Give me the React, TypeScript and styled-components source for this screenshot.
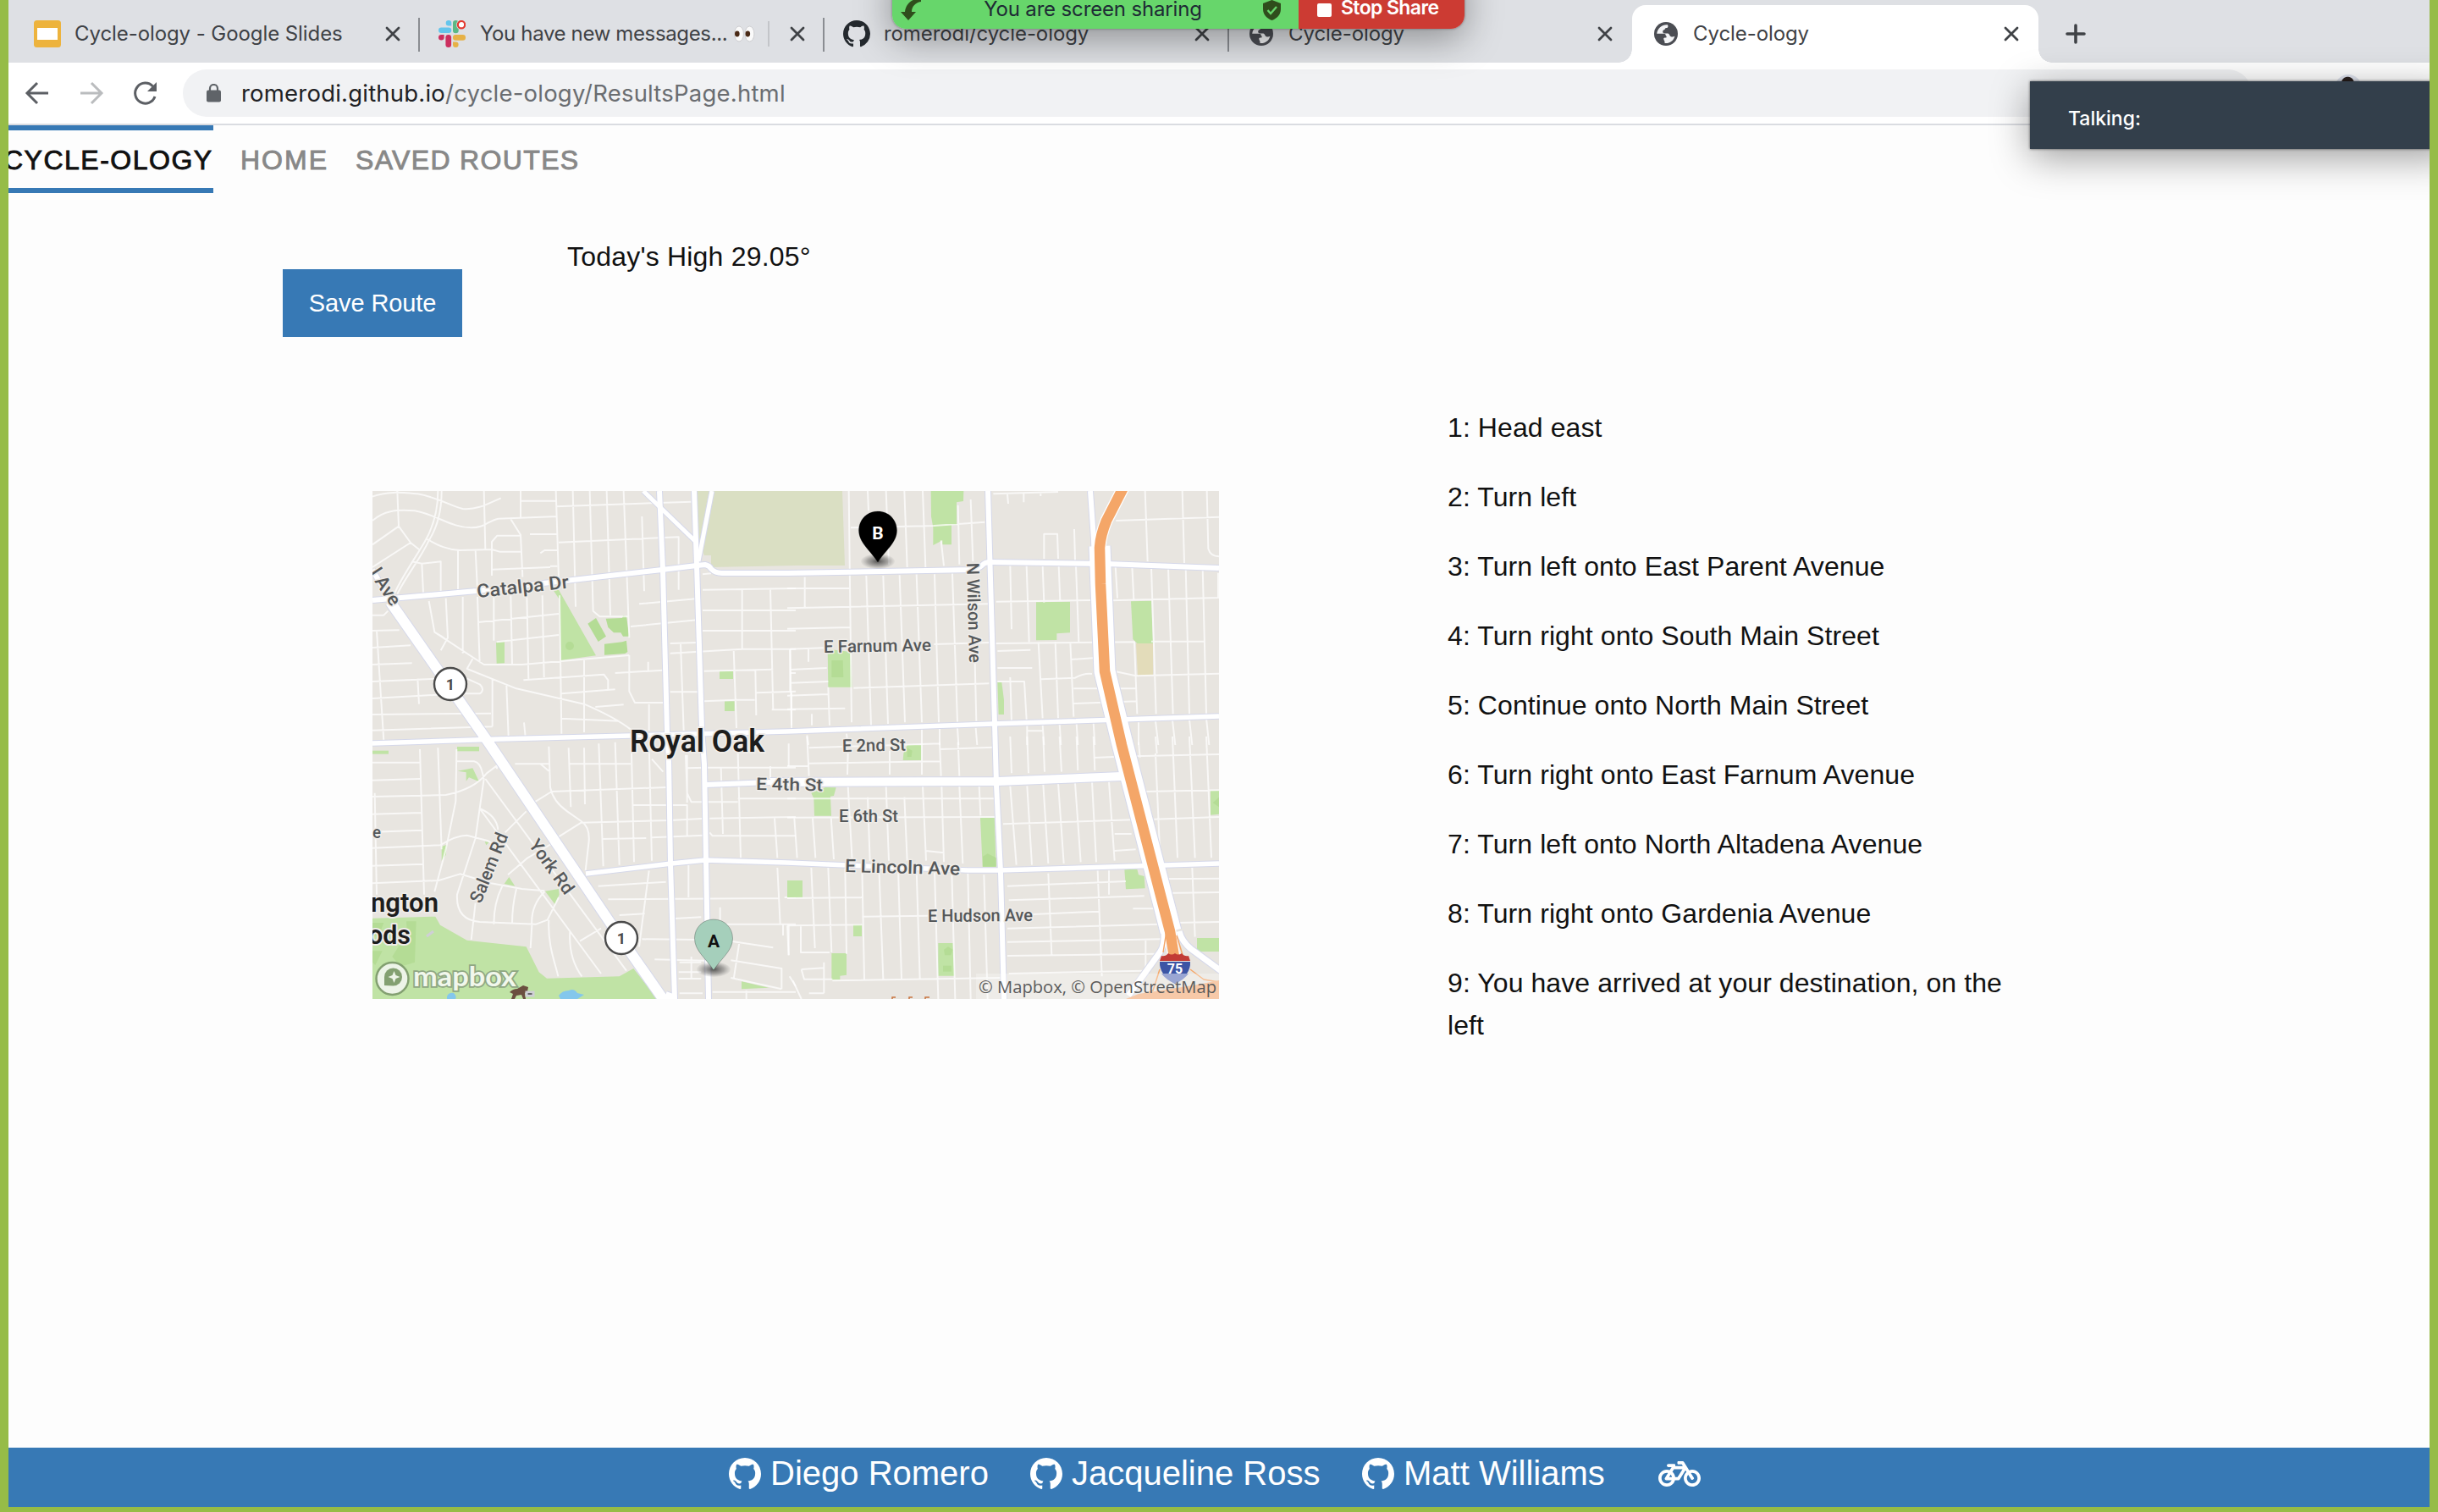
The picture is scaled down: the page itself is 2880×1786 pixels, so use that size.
import React from "react";
import styled, { createGlobalStyle, css } from "styled-components";
import { FaBicycle } from "react-icons/fa";

const BLUE = "#3779b5";
const LIME = "#96bc47";
const UI = `Inter, "Noto Sans", sans-serif`;
const BODY = `"Liberation Sans", Arial, sans-serif`;
const MAPFONT = `Roboto, "Open Sans", sans-serif`;

const Global = createGlobalStyle`
  * { box-sizing: border-box; }
  body { margin: 0; background: #fdfdfd; }
`;

const Screen = styled.div`
  position: relative;
  width: 2880px;
  height: 1786px;
  display: flex;
  flex-direction: column;
  border: solid ${LIME};
  border-width: 0 10px 6px;
  background: #fdfdfd;
  overflow: hidden;
  font-family: ${BODY};
`;

/* ---------- browser chrome ---------- */
const TabStrip = styled.div`
  flex: none;
  height: 74px;
  display: flex;
  background: #dee0e4;
  font-family: ${UI};
`;

const Tab = styled.div<{ $width: number; $pad?: number; $active?: boolean; $divider?: boolean }>`
  position: relative;
  flex: none;
  width: ${(p) => p.$width}px;
  height: 74px;
  display: flex;
  align-items: center;
  padding: 0 23px 0 ${(p) => p.$pad ?? 22}px;
  ${(p) => !p.$active && "padding-top: 6px;"}
  ${(p) =>
    p.$divider &&
    css`
      &::after {
        content: "";
        position: absolute;
        right: 0;
        top: 21px;
        width: 2px;
        height: 40px;
        background: #8a8d92;
      }
    `}
  ${(p) =>
    p.$active &&
    css`
      margin-top: 6px;
      height: 68px;
      background: #fff;
      border-radius: 16px 16px 0 0;
      &::before,
      &::after {
        content: "";
        position: absolute;
        bottom: 0;
        width: 16px;
        height: 16px;
      }
      &::before {
        left: -16px;
        background: radial-gradient(circle at 0 0, transparent 15.5px, #fff 16px);
      }
      &::after {
        right: -16px;
        background: radial-gradient(circle at 100% 0, transparent 15.5px, #fff 16px);
      }
    `}
`;

const TabTitle = styled.span<{ $gap?: number; $track?: number }>`
  margin-left: ${(p) => p.$gap ?? 16}px;
  font-size: 24px;
  line-height: 30px;
  letter-spacing: ${(p) => p.$track ?? -0.08}px;
  color: #3f4246;
  white-space: nowrap;
`;

const TabBody = styled.div`
  flex: 1;
  min-width: 0;
  display: flex;
  align-items: center;
`;

const CloseSlot = styled.div`
  flex: none;
  display: flex;
`;

const EyesSlot = styled.span`
  display: flex;
  margin-left: 8px;
`;

const FaintBar = styled.span`
  width: 2px;
  height: 30px;
  margin-left: 15px;
  background: #c3c5c9;
`;

const NewTab = styled.div`
  margin-left: 32px;
  height: 80px;
  display: flex;
  align-items: center;
`;

const Toolbar = styled.div`
  flex: none;
  height: 74px;
  display: flex;
  align-items: center;
  padding: 0 210px 0 17px;
  background: #fff;
  border-bottom: 2px solid #dadce1;
`;

const NavIcons = styled.div`
  display: flex;
  gap: 32px;
  width: 189px;
`;

const AddressBar = styled.div`
  flex: 1;
  height: 56px;
  display: flex;
  align-items: center;
  gap: 24px;
  padding-left: 28px;
  border-radius: 28px;
  background: #f1f2f4;
  font-family: ${UI};
  font-size: 27.5px;
  letter-spacing: 0.21px;
  color: #6a6d71;
`;

const Host = styled.span`
  color: #202124;
`;

/* ---------- page ---------- */
const SiteNav = styled.nav`
  flex: none;
  height: 80px;
  display: flex;
  font-size: 32px;
`;

const NavItem = styled.a<{ $brand?: boolean; $gap: number; $width?: number; $track: number }>`
  display: flex;
  align-items: center;
  margin-left: ${(p) => p.$gap}px;
  width: ${(p) => (p.$width ? `${p.$width}px` : "auto")};
  padding-top: 2px;
  color: ${(p) => (p.$brand ? "#111" : "#888")};
  letter-spacing: ${(p) => p.$track}px;
  -webkit-text-stroke: 0.9px currentColor;
  white-space: nowrap;
  border: solid ${(p) => (p.$brand ? BLUE : "transparent")};
  border-width: 6px 0;
`;

const TopRow = styled.section`
  flex: none;
  height: 252px;
  display: flex;
  align-items: flex-start;
  padding-left: 324px;
`;

const SaveButton = styled.button`
  width: 212px;
  height: 80px;
  margin: 90px 124px 0 0;
  padding: 0;
  border: 0;
  background: ${BLUE};
  color: #fff;
  font: 29px/80px ${BODY};
  letter-spacing: -0.1px;
`;

const Weather = styled.p`
  margin: 57px 0 0;
  font-size: 32px;
  line-height: 36px;
  letter-spacing: 0.2px;
  color: #111;
`;

const Results = styled.section`
  flex: 1;
  display: flex;
  align-items: flex-start;
  padding-left: 430px;
`;

const MapFrame = styled.div`
  flex: none;
  width: 1000px;
  height: 600px;
  margin: 100px 270px 0 0;
  svg {
    display: block;
  }
`;

const Steps = styled.div`
  width: 690px;
`;

const Step = styled.p`
  margin: 0 0 32px;
  font-size: 32px;
  line-height: 50px;
  letter-spacing: 0.08px;
  color: #111;
`;

const Footer = styled.footer`
  flex: none;
  height: 70px;
  display: flex;
  align-items: flex-start;
  padding: 6px 0 0 851px;
  background: ${BLUE};
  color: #fff;
`;

const Person = styled.a<{ $width: number }>`
  display: flex;
  align-items: center;
  gap: 11px;
  width: ${(p) => p.$width}px;
  height: 48px;
  font-size: 40px;
  line-height: 48px;
  white-space: nowrap;
  svg {
    flex: none;
    margin-top: 2px;
  }
`;

const BikeSlot = styled.span`
  display: flex;
  margin-top: 0;
`;

/* ---------- floating meeting controls ---------- */
const ShareBar = styled.div`
  position: absolute;
  left: 1044px;
  top: -40px;
  width: 676px;
  height: 74px;
  display: flex;
  padding-top: 40px;
  background: linear-gradient(90deg, #67d66b 480px, #cc3b33 480px);
  border-radius: 0 0 16px 16px;
  box-shadow: 0 12px 44px rgba(0, 0, 0, 0.36), 0 0 3px rgba(0, 0, 0, 0.4);
  font-family: ${UI};
`;

const ShareInfo = styled.div`
  width: 480px;
  display: flex;
  padding: 0 21px 0 10px;
  justify-content: space-between;
`;

const ShareText = styled.span`
  margin: -4px 0 0 1px;
  font-size: 24px;
  line-height: 30px;
  letter-spacing: -0.15px;
  color: #1e2b35;
  white-space: nowrap;
`;

const StopShare = styled.div`
  display: flex;
  gap: 11px;
  padding-left: 22px;
  color: #fff;
  font-size: 23px;
  line-height: 30px;
  font-weight: 600;
  letter-spacing: -0.6px;
  white-space: nowrap;
`;

const StopSquare = styled.span`
  width: 17px;
  height: 16px;
  margin-top: 4px;
  border-radius: 2px;
  background: #fff;
`;

const StopLabel = styled.span`
  margin-top: -6px;
`;

const Talking = styled.div`
  position: absolute;
  left: 2388px;
  top: 96px;
  width: 500px;
  height: 80px;
  padding: 4px 0 0 45px;
  background: #333f4b;
  box-shadow: 0 10px 46px rgba(0, 0, 0, 0.38), 0 0 3px rgba(0, 0, 0, 0.6);
  color: #fff;
  font: 500 23px/80px ${UI};
`;

const Avatar = styled.div`
  position: absolute;
  left: 2748px;
  top: 88px;
  width: 32px;
  height: 32px;
  border-radius: 50%;
  background: radial-gradient(circle at 48% 32%, #2b211e 7px, #dfe3ee 8px);
`;

const Octocat = ({ size, color = "currentColor" }: { size: number; color?: string }) => (
  <svg width={size} height={size} viewBox="0 0 16 16" fill={color}>
    <path d="M8 0C3.58 0 0 3.58 0 8c0 3.54 2.29 6.53 5.47 7.59.4.07.55-.17.55-.38 0-.19-.01-.82-.01-1.49-2.01.37-2.53-.49-2.69-.94-.09-.23-.48-.94-.82-1.13-.28-.15-.68-.52-.01-.53.63-.01 1.08.58 1.23.82.72 1.21 1.87.87 2.33.66.07-.52.28-.87.51-1.07-1.78-.2-3.64-.89-3.64-3.95 0-.87.31-1.59.82-2.15-.08-.2-.36-1.02.08-2.12 0 0 .67-.21 2.2.82.64-.18 1.32-.27 2-.27.68 0 1.36.09 2 .27 1.53-1.04 2.2-.82 2.2-.82.44 1.1.16 1.92.08 2.12.51.56.82 1.27.82 2.15 0 3.07-1.87 3.75-3.65 3.95.29.25.54.73.54 1.48 0 1.07-.01 1.93-.01 2.2 0 .21.15.46.55.38A8.013 8.013 0 0016 8c0-4.42-3.58-8-8-8z" />
  </svg>
);

const Globe = () => (
  <svg width="28" height="28" viewBox="0 0 28 28">
    <circle cx="14" cy="14" r="14" fill="#4b4d53" />
    <path
      fill="#f3f4f6"
      d="M16 3.2C9.5 2.6 4 7 3.2 13.8h8c1.700 0 2.600.8 2.600 2.400 1 .3 1.200 1.500.4 2.300h-1.600c-1 0-1.500.8-1.300 1.800.3 1.400 1.200 2.200 1.200 3.200v1.400c5.600.6 10.500-2.500 11.900-8.200-1 .8-3 1.200-4.500.5-1.800-.8-1.600-3.400-3.400-3.800h-4.300c-1.300 0-2-.8-2-1.900 0-1.400.9-2.300 2.300-2.400.2-1.300.7-2 2-2.100 1.200-.1 2-.9 2-2.100z"
    />
  </svg>
);

const Cross = () => (
  <svg width="18" height="18" viewBox="0 0 18 18" stroke="#3f4246" strokeWidth="2.8" strokeLinecap="round">
    <path d="M2 2l14 14M16 2L2 16" />
  </svg>
);

const Slides = () => (
  <svg width="32" height="32" viewBox="0 0 32 32">
    <rect width="32" height="32" rx="3.5" fill="#edb33d" />
    <rect x="4" y="9" width="24" height="14" fill="#fff" />
  </svg>
);

const Slack = () => (
  <svg width="32" height="32" viewBox="0 0 32 32">
    <g fill="#64c5ec">
      <path d="M12 0a3.3 3.3 0 0 1 3.3 3.3v3.3H12A3.3 3.3 0 0 1 12 0z" />
      <rect x="0" y="8.4" width="15.3" height="6.7" rx="3.3" />
    </g>
    <rect x="17" y="0" width="6.7" height="15.3" rx="3.3" fill="#5bb885" />
    <g fill="#cc2f5f">
      <rect x="8.4" y="17" width="6.7" height="15" rx="3.3" />
      <path d="M0 20.3A3.3 3.3 0 0 0 6.6 20.3V17H3.3A3.3 3.3 0 0 0 0 20.3z" />
    </g>
    <g fill="#e6b146">
      <rect x="17" y="17" width="15" height="6.7" rx="3.3" />
      <path d="M17 25.4v3.3a3.3 3.3 0 1 0 3.3-3.3z" />
    </g>
    <circle cx="27" cy="5.2" r="6" fill="#dee0e4" />
    <circle cx="27" cy="5.2" r="4.2" fill="#fff" stroke="#e33a30" strokeWidth="2.2" />
  </svg>
);

const Eyes = () => (
  <svg width="25" height="20" viewBox="0 0 25 20">
    <g fill="#fafafa" stroke="#c5c5c8" strokeWidth=".8">
      <ellipse cx="6" cy="10" rx="5.4" ry="9" />
      <ellipse cx="18.5" cy="10" rx="5.4" ry="9" />
    </g>
    <g fill="#4a2a16">
      <ellipse cx="3.8" cy="10" rx="2.8" ry="3.4" />
      <ellipse cx="16.3" cy="10" rx="2.8" ry="3.4" />
    </g>
  </svg>
);

/* ---------- map ---------- */
const MAJOR: [string, number][] = [
  ["M339 0L343 93L348 283L350 317L352 440L357 600", 6],
  ["M380 0L383 87L389 280L392 323L394 437L397 600", 6],
  ["M320 0L382 60", 5],
  ["M401 0L385 83", 5],
  ["M0 129L123 118L342 93L383 88L393 87Q398 88 400 92Q405 97 413 97L490 97L707 93Q716 92 720 88Q723 84 730 84L867 86L1000 91", 6],
  ["M0 298L150 293L490 284L733 275L1000 266", 5.5],
  ["M393 347L470 344", 6],
  ["M470 344L738 343L885 337", 10],
  ["M252 452L353 440L393 436L490 439L703 448L740 448L1000 440", 5.5],
  ["M727 0L735 275L737 347L742 450L746 600", 6],
  ["M848 0L852 57L853 90L857 217", 6],
  ["M0 93L23 133", 6],
  ["M21 131L137 297L293 528L346 604", 12],
  ["M346 596L357 600", 10],
  ["M859 65L865 213L885 295L943 520", 25],
  ["M935 520Q936 538 930 545Q915 566 893 596", 7],
  ["M953 520Q956 532 967 541L1004 568", 7],
];

const QUADS = [
  {
    at: "translate(-10 -10)",
    roads:
      "M30 50C80 30 130 35 190 40C270 55 310 85 350 93C400 98 440 75 485 55M118 30L123 155L30 220M30 135C70 100 110 95 180 100C260 115 310 160 380 160C430 160 440 135 475 128L685 120M123 155L165 213L195 237M165 213L30 300M262 30C262 90 250 150 215 210C180 270 130 340 105 400M275 30C275 90 265 150 230 205C200 270 150 330 118 395M222 200C260 220 290 238 340 240L455 237M425 30L430 237M555 30V125M555 65H680M520 130L555 185L562 335M588 183H685M453 330V210L472 188H555M453 237L480 245H560M625 250L640 240H685M453 308L660 300M660 296H685M680 30L690 340M740 30L750 440M800 30L812 455L835 475H940M860 30L873 470M920 30L940 550M680 85L1160 68M690 212L1115 193L1115 380M985 120L993 385M170 280L205 287L272 280V385M205 287L210 390M333 240V385M395 240L402 380M230 420L250 530L425 645H560L940 612M250 530L275 545L295 560M290 410L297 550L272 595M350 405V605M402 405L410 640M460 400V560M405 495L690 465M470 565L690 540M520 400L525 645M577 400L583 695M632 400L638 690M693 400L700 890M975 430L1175 412M945 510L1180 487M385 625L365 660L540 730L780 785C850 815 900 840 945 875M940 612V740L960 780H1060M565 700L850 680L865 700V735M700 748L890 733M780 630V885M820 795L920 787M700 836L905 845M890 675L1060 665M1007 635V665M1085 570L1180 567M1085 605L1340 590M1122 570L1133 880M1085 742L1190 742M45 525L70 915M30 525L125 523M30 585L165 577M30 645L170 640M30 705L255 695M30 765L300 750M30 822L450 818M30 878L455 865M455 695V865M365 695L410 715Q430 735 410 748H325M505 720L512 900M190 695L195 785M30 470H70L85 455M567 850L572 900M1010 785V880M1200 380L1530 375M1200 453H1530M1200 525H1530M1340 380V590L1530 590M1440 375L1450 808M1205 668L1450 662M1310 590L1320 870M1205 775L1320 770H1385M1387 665L1390 825M1390 745L1530 740M1445 805H1530M1510 590V740M1515 745V880M1530 675H1510M1200 325L1230 322",
    green: ["670 380 690 380 822 613 697 630 693 415", "468 567 498 565 498 640 470 641", "1260 669 1308 669 1308 696 1260 696", "1278 775 1313 775 1313 810 1278 810"],
    dark: ["793 500 822 480 858 545 830 564", "857 482 915 480 918 472 930 474 940 545 918 545 910 532 885 532 865 513", "852 572 915 565 930 560 934 600 925 606 852 611"],
  },
  {
    at: "translate(490 -10)",
    roads:
      "M218 30L228 850M285 30L288 100M350 30L360 290M415 30L425 300M480 30L490 300M545 205L555 295M225 160L520 153L700 140M605 80L610 290M650 60L658 280M730 40L960 33M780 40L783 75M838 35V70M898 33V48M910 270V182H957L960 270M1017 165L1020 275M1165 135L1530 122M1268 30L1277 280M1400 30L1407 285M1487 30L1492 235Q1500 262 1530 262M0 375H225M0 445L225 440L715 430M740 422L1080 417M1150 418L1530 408M0 518L225 513M62 335V445M280 330L297 860M340 330L357 855M398 328L417 850M458 325L477 850M522 325L537 850M585 322L603 848M520 573L715 567M665 640L670 845M235 728L715 712M10 590L145 585M10 590L15 860M10 663L140 657M10 710L145 705M0 755L145 750M0 803L205 800M145 725L150 860M75 590V635M87 820V860M790 295L795 520M848 295L857 565M905 295L910 425M962 295L967 420M1023 295L1033 565M1163 295L1170 410M1222 295L1228 415M1290 300L1307 820M1350 300L1367 820M1412 300L1425 820M1472 300L1485 820M1527 320V410M740 570L1230 565L1240 820M1290 563H1480M745 597L862 593M745 657H868M890 565L905 835M950 565L960 835M1003 565L1015 830M1005 627L1105 620M900 697L1020 692Q1050 675 1080 678M1165 670L1235 685L1530 677M1015 730H1235M1015 783L1240 775M745 705H840L848 840M790 690L795 850M848 880H905M850 860V930M905 860L910 930M965 855L970 930M1025 853L1030 930M1085 850L1090 930M1245 850V930M1305 845L1315 930M1365 842L1375 930M1425 840L1435 930M1485 835L1495 930M70 895L75 930M210 890L215 930M477 875V930M540 870V930M603 870L607 930M668 870L673 930",
    green: ["509 30 625 30 624 66 600 70 600 150 582 150 582 220 550 220 550 205 517 222 517 160 510 120", "882 424 1002 422 1002 532 955 535 955 558 882 559", "1218 421 1290 419 1296 570 1240 570 1225 555", "143 590 225 600 230 725 145 725", "745 708 760 708 768 770 768 822 749 822"],
    dark: ["157 630 197 630 199 690 157 690"],
  },
  {
    at: "translate(-10 290)",
    roads:
      "M198 45L213 560M262 40L275 400M30 92H198M30 155L198 150M30 213L290 207C350 195 400 175 435 130L475 100M30 275L205 270M35 338L205 332M30 395L270 385C310 360 340 350 365 350L440 370L475 390M30 458L210 452M30 520L265 510L340 487L450 520L560 540L640 547M38 200L45 560M328 45L325 230L290 400L250 550M328 88H390Q412 92 420 130L425 150M430 150L930 830M425 150L395 360L330 560Q325 650 410 657M410 255L840 840M410 255Q470 280 475 330M500 340L575 265M475 95L470 115M510 490L580 430L665 380M395 590L380 720M490 530Q460 590 460 665M540 540Q525 600 525 665M410 657L610 665L650 650L690 570M640 550Q590 600 595 670L590 750M655 650C650 740 680 810 688 850M730 690C725 770 750 820 772 850M765 725L840 680M655 35L660 180Q670 230 720 265L770 300Q800 320 797 370L785 475M535 97H655M625 97L655 122M600 235L665 195L1070 180M690 355L770 305L1085 297L1210 290M725 40L733 250M780 40L783 240M832 25L848 460M890 20L905 455M947 20L957 445M1010 20L1020 440M1020 80L1060 125M725 97H945M950 243H1145V350M1145 235V65M845 363L1000 360M1020 358L1205 350M1140 65L1145 200L1160 232H1325M1140 112L1215 110M830 530L1070 515M865 577L1470 573M905 633L995 628M1010 475L975 745M985 718L1195 720M1100 645L1195 640M1150 455V570M1215 110H1530M1265 110L1272 345M1325 60L1335 430M1325 220H1530M1225 340L1235 352H1530M1225 290L1530 285M1455 290L1465 430M1220 665H1530M1262 605V650M1465 465L1475 665M1490 570H1530M1485 665V705M1505 670V775M1300 725L1450 748M1330 730L1310 860M1300 793L1480 822V895M1300 855L1480 895M1030 790L1240 795M1118 800H1195M1115 835H1195M1115 858H1195M1118 910H1200M1160 780V860M1235 905H1530M1355 900V930M1440 105V165M1505 25V105M1508 850L1530 885",
    green: [
      "30 644 253 638 270 668 365 722 575 745 620 835 648 857 905 850 955 822 1040 930 30 930",
      "330 36 408 36 408 52 330 52",
      "30 50 87 50 87 62 30 62",
      "332 122 385 112 408 160 372 145 362 158 362 127",
      "275 390 293 383 290 420 275 440",
      "514 498 535 530 497 522",
      "642 548 690 540 692 560 677 595",
      "428 372 443 375 433 385",
      "1500 510 1530 510 1530 570 1500 570",
      "1338 868 1435 890 1338 895",
    ],
    dark: ["30 660 70 660 55 700 30 710", "150 655 185 655 180 800 130 815 100 780 125 740 155 740", "30 760 65 760 40 810 30 800"],
  },
  {
    at: "translate(490 290)",
    roads:
      "M70 0L77 140M77 40L540 25M77 95L540 88M215 60L213 135M363 50V135M477 30V135M540 20L545 140M540 45L730 38M605 20L610 140M0 105H75M0 220H735M0 287L740 285M790 0L795 130M850 0L855 130M907 0L912 125M965 0L972 125M1025 0L1030 120M1085 0L1090 120M1085 75L1160 72M1225 70L1530 63M1245 20L1250 75M1305 0L1310 60M1365 0L1383 430M1425 0L1445 430M1485 0L1503 430M1265 195L1530 190M1305 60L1320 400M215 175L230 440M285 215L293 440M350 175L360 440M415 215L425 440M480 175L492 440M547 175L555 445M610 175L622 450M680 175L685 280M25 290L35 430M90 290L100 430M155 285L165 435M490 405L555 412M790 175L812 455M850 175L867 455M907 170L925 450M960 165L980 450M1020 165L1040 445M1080 160L1095 445M1140 160L1160 440M765 310L1225 295M1300 293L1530 285M1160 345H1220M1160 405L1235 400M85 465L98 750M145 465L157 765M205 465L210 770M265 465L273 860M325 465L340 860M393 470L405 860M458 470L470 860M522 475L535 930M583 480L595 930M640 485L650 930M697 490L710 930M0 573L265 570M265 638L500 635M0 670L265 667M0 670L5 775M48 670V765H150M50 825L60 860H160M50 825L130 820M130 800V910M160 865L760 855M780 530L1200 513M1280 505L1530 503M785 580L1265 565M1335 555L1530 552M870 630L1105 620M780 680L1320 665M1370 660L1530 657M780 728L1325 718M780 777L1310 770M785 840L1265 830M925 485L937 775M1100 475L1115 850M1140 475V560M1435 465L1445 710M1225 610H1320M1270 720V820M20 865L50 930M77 910H130",
    green: [
      "412 60 425 30 475 30 475 84 410 84",
      "85 200 135 180 173 181 165 210 153 212 156 281 96 281 94 220",
      "684 288 734 288 740 461 692 461",
      "1500 192 1530 192 1530 275 1500 278",
      "1195 472 1240 470 1245 490 1265 495 1268 538 1200 541",
      "0 510 54 510 54 570 0 570",
      "234 667 264 667 264 708 234 708",
      "157 768 210 768 210 845 187 848 187 862 157 862",
      "535 732 587 732 592 848 535 848",
      "1452 714 1530 714 1530 762 1452 762",
    ],
    dark: ["425 40 443 50 440 72 425 72", "693 425 710 415 740 430 740 461 693 461", "555 755 570 745 587 755 580 775 558 775", "552 812 582 812 582 833 552 833", "1508 235 1530 215 1530 250"],
  },
];

type LabelProps = { x: number; y: number; w: number; size: number; rot?: number; bold?: boolean; children: string };
const Label = ({ x, y, w, size, rot = 0, bold, children }: LabelProps) => (
  <text
    transform={`translate(${x} ${y}) rotate(${rot})`}
    fontSize={size}
    fontWeight={bold ? 600 : 500}
    fill={bold ? "#1d1d1d" : "#55585a"}
    stroke="#efece8"
    strokeWidth={bold ? 4 : 3}
    paintOrder="stroke"
    strokeLinejoin="round"
    textLength={w}
    lengthAdjust="spacingAndGlyphs"
  >
    {children}
  </text>
);

const Marker = ({ x, y, letter, fill, ink }: { x: number; y: number; letter: string; fill: string; ink: string }) => (
  <g transform={`translate(${x} ${y})`}>
    <ellipse cx="0" cy="59" rx="20" ry="9" fill="url(#pinShadow)" />
    <path d="M0 0C-13 0-22.5 10-22.5 22.5C-22.5 37-9 46 0 60C9 46 22.5 37 22.5 22.5C22.5 10 13 0 0 0z" fill={fill} stroke="rgba(0,0,0,.25)" strokeWidth="1" />
    <text x="0" y="33" textAnchor="middle" fontSize="21" fontWeight="700" fill={ink}>
      {letter}
    </text>
  </g>
);

const RouteShield = ({ x, y }: { x: number; y: number }) => (
  <g>
    <circle cx={x} cy={y} r="19" fill="#fff" stroke="#4a4a4a" strokeWidth="2.4" />
    <text x={x} y={y + 6.5} textAnchor="middle" fontSize="18" fontWeight="700" fill="#4a4a4a">
      1
    </text>
  </g>
);

const RouteMap = () => (
  <svg width="1000" height="600" viewBox="0 0 1000 600" fontFamily={MAPFONT}>
    <defs>
      <radialGradient id="pinShadow">
        <stop offset="0" stopColor="#222" stopOpacity=".75" />
        <stop offset=".6" stopColor="#444" stopOpacity=".4" />
        <stop offset="1" stopColor="#666" stopOpacity=".05" />
      </radialGradient>
    </defs>
    <rect width="1000" height="600" fill="#e8e5e0" />
    <path d="M383 0H555L558 88L500 88L400 90V76H392L385 60z" fill="#dadfc3" />
    <path d="M902 180H922V217L904 218z" fill="#e3dcba" />
    {QUADS.map((q) => (
      <g key={q.at} transform={`${q.at} scale(.33333)`}>
        {q.green.map((p) => (
          <polygon key={p} points={p} fill="#c0e3a5" />
        ))}
        {q.dark.map((p) => (
          <polygon key={p} points={p} fill="#b4dc95" />
        ))}
        <path d={q.roads} fill="none" stroke="#fff" strokeOpacity=".72" strokeWidth="6" strokeLinejoin="round" />
      </g>
    ))}
    <circle cx="233" cy="183" r="5" fill="#b4dc95" />
    <g fill="none" strokeLinejoin="round">
      {MAJOR.map(([d, w]) => (
        <path key={d} d={d} stroke="#d5d8ea" strokeWidth={w + 2} />
      ))}
      {MAJOR.map(([d, w]) => (
        <path key={d} d={d} stroke="#fff" strokeWidth={w} />
      ))}
      <path d="M887 -4L867 35Q860 52 859 67L860 110L865 213L885 300L942 520L947 550" stroke="#fff" strokeWidth="15" />
      <path d="M887 -4L867 35Q860 52 859 67L860 110L865 213L885 300L942 520L947 550" stroke="#f4a668" strokeWidth="12.5" />
      <path d="M938 520L934 545M950 525L957 548M966 565L982 577L1000 580M930 565L922 590L905 598" stroke="#f4a668" strokeWidth="1.5" />
    </g>
    <path d="M890 600L905 594L975 583L1000 578V600z" fill="#f4b587" />
    <rect x="713" y="570" width="287" height="30" fill="#fff" opacity=".28" />

    <path d="M88 597Q90 592 96 593Q100 597 98 600H88zM220 596Q224 590 232 590Q238 587 242 593L250 595L242 600H222z" fill="#84c7ec" />
    <path d="M162 592Q166 588 171 588L178 584L184 586L183 591L180 593L181 600H178L176 595L170 596L168 600H164L166 594z" fill="#6b4f3f" />
    <path d="M64 526L72 520M182 592h8v4h-8z" stroke="#cfcfd6" strokeWidth="3" />
    <path d="M614 600v-2h4M634 600v-2h4M653 600v-2h5" stroke="#c8743f" strokeWidth="1.5" fill="none" />

    <Label x={-4} y={97} w={48} size={22} rot={57}>l Ave</Label>
    <Label x={124} y={126} w={109} size={22} rot={-6}>Catalpa Dr</Label>
    <Label x={533} y={191} w={127} size={20.5} rot={-1}>E Farnum Ave</Label>
    <Label x={702} y={85} w={118} size={20.5} rot={88.5}>N Wilson Ave</Label>
    <Label x={304} y={308} w={159} size={37} bold>Royal Oak</Label>
    <Label x={555} y={308} w={75} size={20.5} rot={-1}>E 2nd St</Label>
    <Label x={453} y={353} w={79} size={20.5} rot={1}>E 4th St</Label>
    <Label x={551} y={391} w={70} size={20.5}>E 6th St</Label>
    <Label x={558} y={450} w={136} size={21.5} rot={1.5}>E Lincoln Ave</Label>
    <Label x={656} y={509} w={124} size={20.5} rot={-0.5}>E Hudson Ave</Label>
    <Label x={128} y={488} w={87} size={21.5} rot={-68}>Salem Rd</Label>
    <Label x={184} y={418} w={74} size={21.5} rot={54}>York Rd</Label>
    <Label x={0} y={410} w={10} size={20.5}>e</Label>
    <Label x={-2} y={497} w={80} size={31} bold>ngton</Label>
    <Label x={-5} y={535} w={50} size={31} bold>ods</Label>

    <RouteShield x={92} y={228} />
    <RouteShield x={294} y={528} />
    <Marker x={597} y={24} letter="B" fill="#000" ink="#fff" />
    <Marker x={403} y={506} letter="A" fill="#a5cfbb" ink="#111" />

    <circle cx="23.5" cy="576" r="19" fill="#edf4e8" stroke="#83a071" strokeWidth="2.5" />
    <path d="M14 584V574A10.5 10.5 0 1 1 24.5 584.5z" fill="#83a071" />
    <path d="M25.5 567l2 5 5 2-5 2-2 5-2-5-5-2 5-2z" fill="#edf4e8" />
    <text x="48" y="584.5" fontSize="32" fontFamily='Lato, "Open Sans", sans-serif' fontWeight="700" fill="#f1f7ec" stroke="#8fa783" strokeWidth="3.5" paintOrder="stroke" textLength="122" lengthAdjust="spacingAndGlyphs">
      mapbox
    </text>

    <path d="M932 549Q937 550 940 546Q944 549 948 546Q952 549 956 546Q959 550 964 549L966 555H930z" fill="#c23b35" />
    <path d="M930 556H966Q967 571 948 582Q929 571 930 556z" fill="#3c55a5" />
    <path d="M932 570H964Q959 577 948 582Q937 577 932 570z" fill="#9aa6d3" />
    <text x="948" y="570" textAnchor="middle" fontSize="16" fontWeight="700" fill="#fff">75</text>
    <text x="716" y="593" fontSize="19.5" fontFamily='"Open Sans", sans-serif' fill="#5b5b5b" textLength="281" lengthAdjust="spacingAndGlyphs">
      © Mapbox, © OpenStreetMap
    </text>
  </svg>
);

const STEPS = [
  "Head east",
  "Turn left",
  "Turn left onto East Parent Avenue",
  "Turn right onto South Main Street",
  "Continue onto North Main Street",
  "Turn right onto East Farnum Avenue",
  "Turn left onto North Altadena Avenue",
  "Turn right onto Gardenia Avenue",
  "You have arrived at your destination, on the left",
];

export default function App() {
  return (
    <Screen>
      <Global />
      <TabStrip>
        <Tab $width={486} $pad={30} $divider>
          <TabBody>
            <Slides />
            <TabTitle>Cycle-ology - Google Slides</TabTitle>
          </TabBody>
          <CloseSlot><Cross /></CloseSlot>
        </Tab>
        <Tab $width={478} $divider>
          <TabBody>
            <Slack />
            <TabTitle $gap={17} $track={-0.36}>You have new messages...</TabTitle>
            <EyesSlot><Eyes /></EyesSlot>
            <FaintBar />
          </TabBody>
          <CloseSlot><Cross /></CloseSlot>
        </Tab>
        <Tab $width={478} $divider>
          <TabBody>
            <Octocat size={32} color="#24292e" />
            <TabTitle>romerodi/cycle-ology</TabTitle>
          </TabBody>
          <CloseSlot><Cross /></CloseSlot>
        </Tab>
        <Tab $width={476} $pad={24}>
          <TabBody>
            <Globe />
            <TabTitle $gap={18}>Cycle-ology</TabTitle>
          </TabBody>
          <CloseSlot><Cross /></CloseSlot>
        </Tab>
        <Tab $width={480} $pad={26} $active>
          <TabBody>
            <Globe />
            <TabTitle $gap={18}>Cycle-ology</TabTitle>
          </TabBody>
          <CloseSlot><Cross /></CloseSlot>
        </Tab>
        <NewTab>
          <svg width="24" height="24" stroke="#3f4246" strokeWidth="3.6" strokeLinecap="round">
            <path d="M12 2v20M2 12h20" />
          </svg>
        </NewTab>
      </TabStrip>

      <Toolbar>
        <NavIcons>
          <svg width="32" height="32" viewBox="0 0 32 32" fill="none" stroke="#5c5f64" strokeWidth="3">
            <path d="M30 16H6M17 4L5 16L17 28" />
          </svg>
          <svg width="32" height="32" viewBox="0 0 32 32" fill="none" stroke="#babcbe" strokeWidth="3">
            <path d="M4 16H28M17 4L29 16L17 28" />
          </svg>
          <svg width="32" height="32" viewBox="0 0 32 32" fill="none" stroke="#5c5f64" strokeWidth="3">
            <path d="M25.5 8A12 12 0 1 0 28 20" />
            <path d="M30 3V14H19z" fill="#5c5f64" stroke="none" />
          </svg>
        </NavIcons>
        <AddressBar>
          <svg width="17" height="22" viewBox="0 0 17 22">
            <rect x="0" y="7.5" width="17" height="14" rx="2" fill="#5f6368" />
            <path d="M4 8V5.5a4.5 4.5 0 0 1 9 0V8" fill="none" stroke="#5f6368" strokeWidth="2.2" />
          </svg>
          <span>
            <Host>romerodi.github.io</Host>/cycle-ology/ResultsPage.html
          </span>
        </AddressBar>
      </Toolbar>

      <SiteNav>
        <NavItem $brand $gap={-6} $width={248} $track={1.5}>CYCLE-OLOGY</NavItem>
        <NavItem $gap={32} $track={2}>HOME</NavItem>
        <NavItem $gap={32} $track={1.35}>SAVED ROUTES</NavItem>
      </SiteNav>

      <TopRow>
        <SaveButton>Save Route</SaveButton>
        <Weather>Today's High 29.05°</Weather>
      </TopRow>

      <Results>
        <MapFrame>
          <RouteMap />
        </MapFrame>
        <Steps>
          {STEPS.map((text, i) => (
            <Step key={text}>
              {i + 1}: {text}
            </Step>
          ))}
        </Steps>
      </Results>

      <Footer>
        <Person $width={356}><Octocat size={38} />Diego Romero</Person>
        <Person $width={392}><Octocat size={38} />Jacqueline Ross</Person>
        <Person $width={350}><Octocat size={38} />Matt Williams</Person>
        <BikeSlot><FaBicycle size={50} /></BikeSlot>
      </Footer>

      <Avatar />
      <ShareBar>
        <ShareInfo>
          <svg width="25" height="24" viewBox="0 0 25 24" fill="#2f4d1c">
            <path d="M24 -2C14 -2 6 4 5 14H0L9 24L18 14H13C13 8 17 3 24 2z" />
          </svg>
          <ShareText>You are screen sharing</ShareText>
          <svg width="21" height="24" viewBox="0 0 21 24">
            <path d="M10.5 0L21 4V11C21 17.5 16 22 10.5 24C5 22 0 17.5 0 11V4z" fill="#2f4d1c" />
            <path d="M5.5 12l3.5 4 7-8" fill="none" stroke="#67d66b" strokeWidth="2.4" />
          </svg>
        </ShareInfo>
        <StopShare>
          <StopSquare />
          <StopLabel>Stop Share</StopLabel>
        </StopShare>
      </ShareBar>
      <Talking>Talking:</Talking>
    </Screen>
  );
}
